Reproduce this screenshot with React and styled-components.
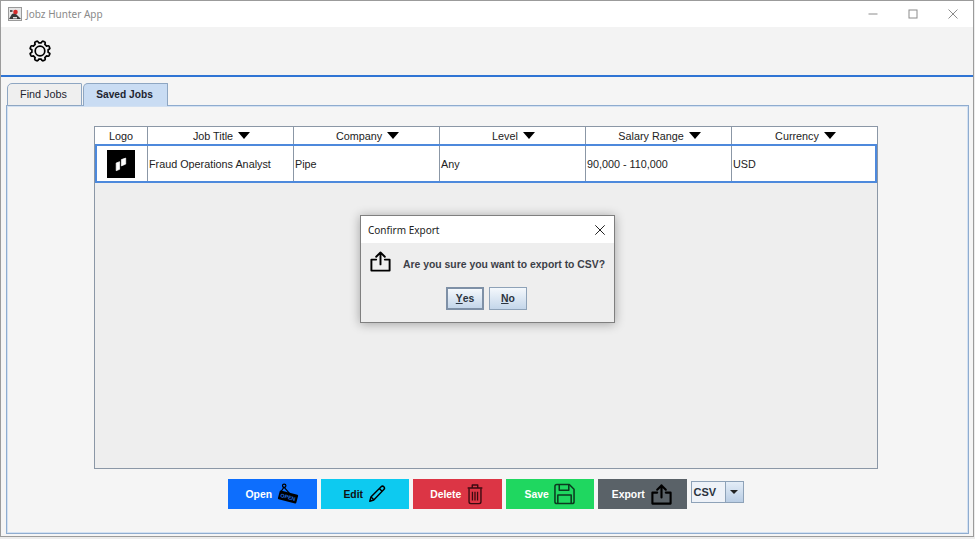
import React from 'react';
import styled, { createGlobalStyle } from 'styled-components';

const Global = createGlobalStyle`
  html, body { margin: 0; padding: 0; width: 975px; height: 539px; overflow: hidden; background: #ececec; }
  * { box-sizing: border-box; }
  #root { width: 975px; height: 539px; }
`;

const Win = styled.div`
  position: relative;
  width: 974px; height: 537px;
  border: 1px solid #9b9b9b;
  background: #f5f5f5;
  display: flex; flex-direction: column;
  font-family: "Liberation Sans", Arial, sans-serif;
  color: #1c1c1c;
`;
const TitleBar = styled.div`
  height: 26px; background: #fff; display: flex; align-items: center;
  padding-left: 7px; flex: none;
`;
const AppTitle = styled.span`
  font-family: "Noto Sans", sans-serif; font-size: 10px; color: #8a8a8a; margin-left: 4px; margin-top: -1px;
`;
const WinControls = styled.div`
  margin-left: auto; display: flex; align-items: center; height: 100%;
`;
const WinControl = styled.div`
  width: 40px; height: 100%; display: flex; align-items: center; justify-content: center;
`;
const ToolBar = styled.div`
  height: 50px; flex: none; background: #f3f3f3; border-bottom: 2px solid #2f74d4;
  display: flex; align-items: center; padding-left: 28px;
`;
const Body = styled.div`
  flex: 1; display: flex; flex-direction: column; padding: 6px 4px 2px 5px; min-height: 0;
`;
const Tabs = styled.div`
  display: flex; height: 23px; flex: none; padding-left: 1px; margin-bottom: -1px; position: relative; z-index: 1;
`;
const Tab = styled.div`
  width: ${p => p.$w}px; height: 23px; display: flex; align-items: center; justify-content: center;
  font-size: ${p => p.$active ? 10.2 : 10.8}px; margin-right: 1px; padding: 0 2px 2px 0;
  font-weight: ${p => p.$active ? 700 : 400};
  background: ${p => p.$active ? '#c9dcf3' : '#efefef'};
  border: 1px solid #8ea6c2; border-bottom: ${p => p.$active ? '0' : '1px solid #8ea6c2'};
  border-top-left-radius: 5px; border-top-right-radius: 1px;
  color: #1e2530;
`;
const Panel = styled.div`
  flex: 1; min-height: 0; border: 1px solid #8faccf; box-shadow: inset 0 0 0 1px #d3e1f2;
  background: #f5f5f5; display: flex; flex-direction: column; align-items: flex-start;
  padding: 20px 0 0 87px;
`;
const Table = styled.div`
  width: 784px; height: 343px; flex: none; background: #eeeeee; border: 1px solid #8b97a6;
  display: flex; flex-direction: column;
`;
const Row = styled.div`
  display: grid; grid-template-columns: 53px 146px 146px 146px 146px 1fr;
`;
const HeadRow = styled(Row)`
  height: 17px; background: #fff; flex: none;
`;
const HeadCell = styled.div`
  border-right: 1px solid #8b97a6; display: flex; align-items: center; justify-content: center;
  gap: 5px; font-size: 10.8px; color: #222; padding-left: ${p => p.$sort ? 2 : 0}px;
  &:last-child { border-right: 0; }
`;
const Caret = styled.span`
  width: 0; height: 0; border-left: 6px solid transparent; border-right: 6px solid transparent;
  border-top: 7px solid #000; display: inline-block; margin-top: -1px;
`;
const DataRow = styled(Row)`
  height: 39px; background: #fff; border: 2px solid #4d89dc; flex: none;
  grid-template-columns: 51px 146px 146px 146px 146px 1fr;
`;
const DataCell = styled.div`
  border-right: 1px solid #8b97a6; display: flex; align-items: center; padding-left: 1px;
  font-size: 10.8px; color: #222;
  &:last-child { border-right: 0; }
`;
const LogoCell = styled(DataCell)`
  justify-content: center; padding: 0 2px 0 0;
`;
const Actions = styled.div`
  display: flex; gap: 4px; align-items: center; margin: 10px 0 0 134px; height: 30px; flex: none;
`;
const ActionBtn = styled.div`
  width: 88.5px; height: 30px; background: ${p => p.$bg}; color: ${p => p.$fg || '#fff'};
  display: flex; align-items: center; justify-content: center; gap: 5px;
  font-size: 10.4px; font-weight: 700;
`;
const Combo = styled.div`
  width: 53px; height: 22px; border: 1px solid #8ea2b8; display: flex; background: #eef2f8;
  font-size: 11px; font-weight: 700; color: #2a3340; margin-top: -5px;
`;
const ComboValue = styled.div`
  flex: 1; display: flex; align-items: center; padding-left: 2px; border-right: 1px solid #8ea2b8;
`;
const ComboArrow = styled.div`
  width: 17px; display: flex; align-items: center; justify-content: center;
  background: linear-gradient(#e4edf7, #b9cde4);
  &::after { content: ''; border-left: 4px solid transparent; border-right: 4px solid transparent; border-top: 4px solid #222; }
`;
const Dialog = styled.div`
  position: absolute; left: 359px; top: 214px; width: 255px; height: 108px;
  border: 1px solid #7f7f7f; background: #eeeeee; box-shadow: 0 1px 10px rgba(0,0,0,.32);
  display: flex; flex-direction: column;
`;
const DialogTitle = styled.div`
  height: 27px; background: #fff; display: flex; align-items: center; justify-content: space-between;
  padding: 0 9px 0 7px; font-family: "Noto Sans", sans-serif; font-size: 10px; color: #222; flex: none;
`;
const DialogBody = styled.div`
  display: flex; align-items: center; padding: 7px 0 0 8px; gap: 11px; font-size: 10.4px; font-weight: 700; color: #3c4048;
`;
const DialogMessage = styled.span`
  padding-top: 5px;
`;
const DialogButtons = styled.div`
  display: flex; justify-content: center; gap: 5px; margin-top: 14px; padding-right: 2px;
`;
const DialogBtn = styled.div`
  width: ${p => p.$w}px; height: 23px; font-size: 10.4px; font-weight: 700; color: #2b3440;
  display: flex; align-items: center; justify-content: center;
  background: linear-gradient(#f4f8fc, #c4d6ea);
  border: ${p => p.$focus ? '2px solid #7e90a6' : '1px solid #8ea2b8'};
  & u { text-underline-offset: 1px; }
`;

const Share = ({ size = 24, stroke = '#000', w = 2.2 }) => (
  <svg width={size} height={size} viewBox="0 0 24 24" fill="none" stroke={stroke} strokeWidth={w} strokeLinecap="round" strokeLinejoin="round">
    <path d="M7.5 10H2.5v11.5h19V10h-5" />
    <path d="M12 15V2.5M7.5 7L12 2.5 16.5 7" />
  </svg>
);

const gearPath = (() => {
  const teeth = 8, c = 11, ro = 10.2, ri = 8.2;
  const pt = (r, a) => `${(c + r * Math.cos(a)).toFixed(2)} ${(c + r * Math.sin(a)).toFixed(2)}`;
  let d = '';
  for (let i = 0; i < teeth; i++) {
    const a = (i * 2 * Math.PI) / teeth - Math.PI / 8;
    const s = Math.PI / teeth;
    d += `${i ? 'L' : 'M'}${pt(ri, a - s * 0.62)} Q${pt(ro + 0.5, a - s * 0.45)} ${pt(ro, a - s * 0.15)} L${pt(ro, a + s * 0.15)} Q${pt(ro + 0.5, a + s * 0.45)} ${pt(ri, a + s * 0.62)} `;
  }
  return d + 'Z';
})();
const Gear = () => (
  <svg width="22" height="22" viewBox="0 0 22 22" fill="none" stroke="#000" strokeWidth="1.7" strokeLinejoin="round">
    <path d={gearPath} />
    <circle cx="11" cy="11" r="4.8" />
  </svg>
);
const AppIcon = () => (
  <svg width="14" height="14" viewBox="0 0 14 14">
    <rect x="0.5" y="0.5" width="13" height="13" fill="#e6e6e6" stroke="#9a9a9a" />
    <path d="M1 12l3-5 3-1 6 6z" fill="#3a3a3a" />
    <circle cx="7.5" cy="5" r="2.3" fill="#d42a2a" />
    <rect x="2" y="3" width="2.5" height="2" fill="#555" />
    <rect x="5" y="10" width="4" height="1.5" fill="#ddd" />
  </svg>
);
const OpenSign = () => (
  <svg width="22" height="22" viewBox="0 0 22 22">
    <g transform="rotate(15 11 14)">
      <rect x="1.5" y="9.5" width="19" height="9" rx="1" fill="#000" />
      <text x="11" y="16" textAnchor="middle" fontSize="5.4" fontWeight="700" fontFamily="Liberation Sans" fill="#1f6fe0">OPEN</text>
    </g>
    <path d="M4 8.5L7 4.2l5.5 6.2" fill="none" stroke="#000" strokeWidth="1.2" />
    <circle cx="7.2" cy="2.8" r="1.7" fill="none" stroke="#000" strokeWidth="1.2" />
  </svg>
);
const Pencil = () => (
  <svg width="18" height="18" viewBox="0 0 20 20" fill="none" stroke="#000" strokeWidth="1.6" strokeLinejoin="round">
    <path d="M2 18l1.2-4.6L14.6 2a2.1 2.1 0 0 1 3 3L6.4 16.6z" />
    <path d="M12.6 4l3 3M3.4 13.4l3 3" />
  </svg>
);
const Trash = () => (
  <svg width="18" height="22" viewBox="0 0 18 24" fill="none" stroke="#3a0a10" strokeWidth="1.5" strokeLinejoin="round">
    <path d="M1 5.5h16M6 5V2.2h6V5" />
    <path d="M2.5 6v14.5a2 2 0 0 0 2 2h9a2 2 0 0 0 2-2V6" />
    <path d="M6.2 9.5v9.5M9 9.5v9.5M11.8 9.5v9.5" strokeWidth="1.4" />
  </svg>
);
const Floppy = () => (
  <svg width="21" height="22" viewBox="0 0 22 22" fill="none" stroke="#0c3a20" strokeWidth="1.6" strokeLinejoin="round">
    <path d="M3 1h13l5 5v13a2 2 0 0 1-2 2H3a2 2 0 0 1-2-2V3a2 2 0 0 1 2-2z" />
    <path d="M5.5 1v6h10V1" />
    <path d="M4 21v-9h14v9" />
  </svg>
);

const headers = ['Job Title', 'Company', 'Level', 'Salary Range', 'Currency'];
const cells = ['Fraud Operations Analyst', 'Pipe', 'Any', '90,000 - 110,000', 'USD'];

export default function App() {
  return (
    <Win>
      <Global />
      <TitleBar>
        <AppIcon />
        <AppTitle>Jobz Hunter App</AppTitle>
        <WinControls>
          <WinControl>
            <svg width="10" height="10" viewBox="0 0 10 10"><path d="M0.5 5h9" stroke="#8c8c8c" /></svg>
          </WinControl>
          <WinControl>
            <svg width="10" height="10" viewBox="0 0 10 10"><rect x="1" y="1" width="8" height="8" fill="none" stroke="#8c8c8c" /></svg>
          </WinControl>
          <WinControl>
            <svg width="10" height="10" viewBox="0 0 10 10"><path d="M0.5 0.5l9 9M9.5 0.5l-9 9" stroke="#8c8c8c" /></svg>
          </WinControl>
        </WinControls>
      </TitleBar>
      <ToolBar><Gear /></ToolBar>
      <Body>
        <Tabs>
          <Tab $w={75}>Find Jobs</Tab>
          <Tab $w={85} $active>Saved Jobs</Tab>
        </Tabs>
        <Panel>
          <Table>
            <HeadRow>
              <HeadCell>Logo</HeadCell>
              {headers.map(h => <HeadCell key={h} $sort>{h} <Caret /></HeadCell>)}
            </HeadRow>
            <DataRow>
              <LogoCell>
                <svg width="28" height="28" viewBox="0 0 28 28">
                  <rect width="28" height="28" fill="#000" />
                  <path d="M9.2 13l3.4-1.3v7.6l-3.4 1.4z" fill="#fff" stroke="#fff" strokeWidth="0.7" strokeLinejoin="round" />
                  <path d="M14.4 9.6l4.3-1.5v6l-4.3 1.8z" fill="#fff" stroke="#fff" strokeWidth="0.7" strokeLinejoin="round" />
                </svg>
              </LogoCell>
              {cells.map(c => <DataCell key={c}>{c}</DataCell>)}
            </DataRow>
          </Table>
          <Actions>
            <ActionBtn $bg="#0d6efd">Open <OpenSign /></ActionBtn>
            <ActionBtn $bg="#0dcaf0" $fg="#111">Edit <Pencil /></ActionBtn>
            <ActionBtn $bg="#dc3545">Delete <Trash /></ActionBtn>
            <ActionBtn $bg="#1fd760">Save <Floppy /></ActionBtn>
            <ActionBtn $bg="#5a6268">Export <Share size={23} /></ActionBtn>
            <Combo>
              <ComboValue>CSV</ComboValue>
              <ComboArrow />
            </Combo>
          </Actions>
        </Panel>
      </Body>
      <Dialog>
        <DialogTitle>
          Confirm Export
          <svg width="10" height="10" viewBox="0 0 10 10"><path d="M0.3 0.3l9.4 9.4M9.7 0.3l-9.4 9.4" stroke="#222" /></svg>
        </DialogTitle>
        <DialogBody>
          <Share size={23} w={2} />
          <DialogMessage>Are you sure you want to export to CSV?</DialogMessage>
        </DialogBody>
        <DialogButtons>
          <DialogBtn $w={38} $focus><u>Y</u>es</DialogBtn>
          <DialogBtn $w={38}><u>N</u>o</DialogBtn>
        </DialogButtons>
      </Dialog>
    </Win>
  );
}
